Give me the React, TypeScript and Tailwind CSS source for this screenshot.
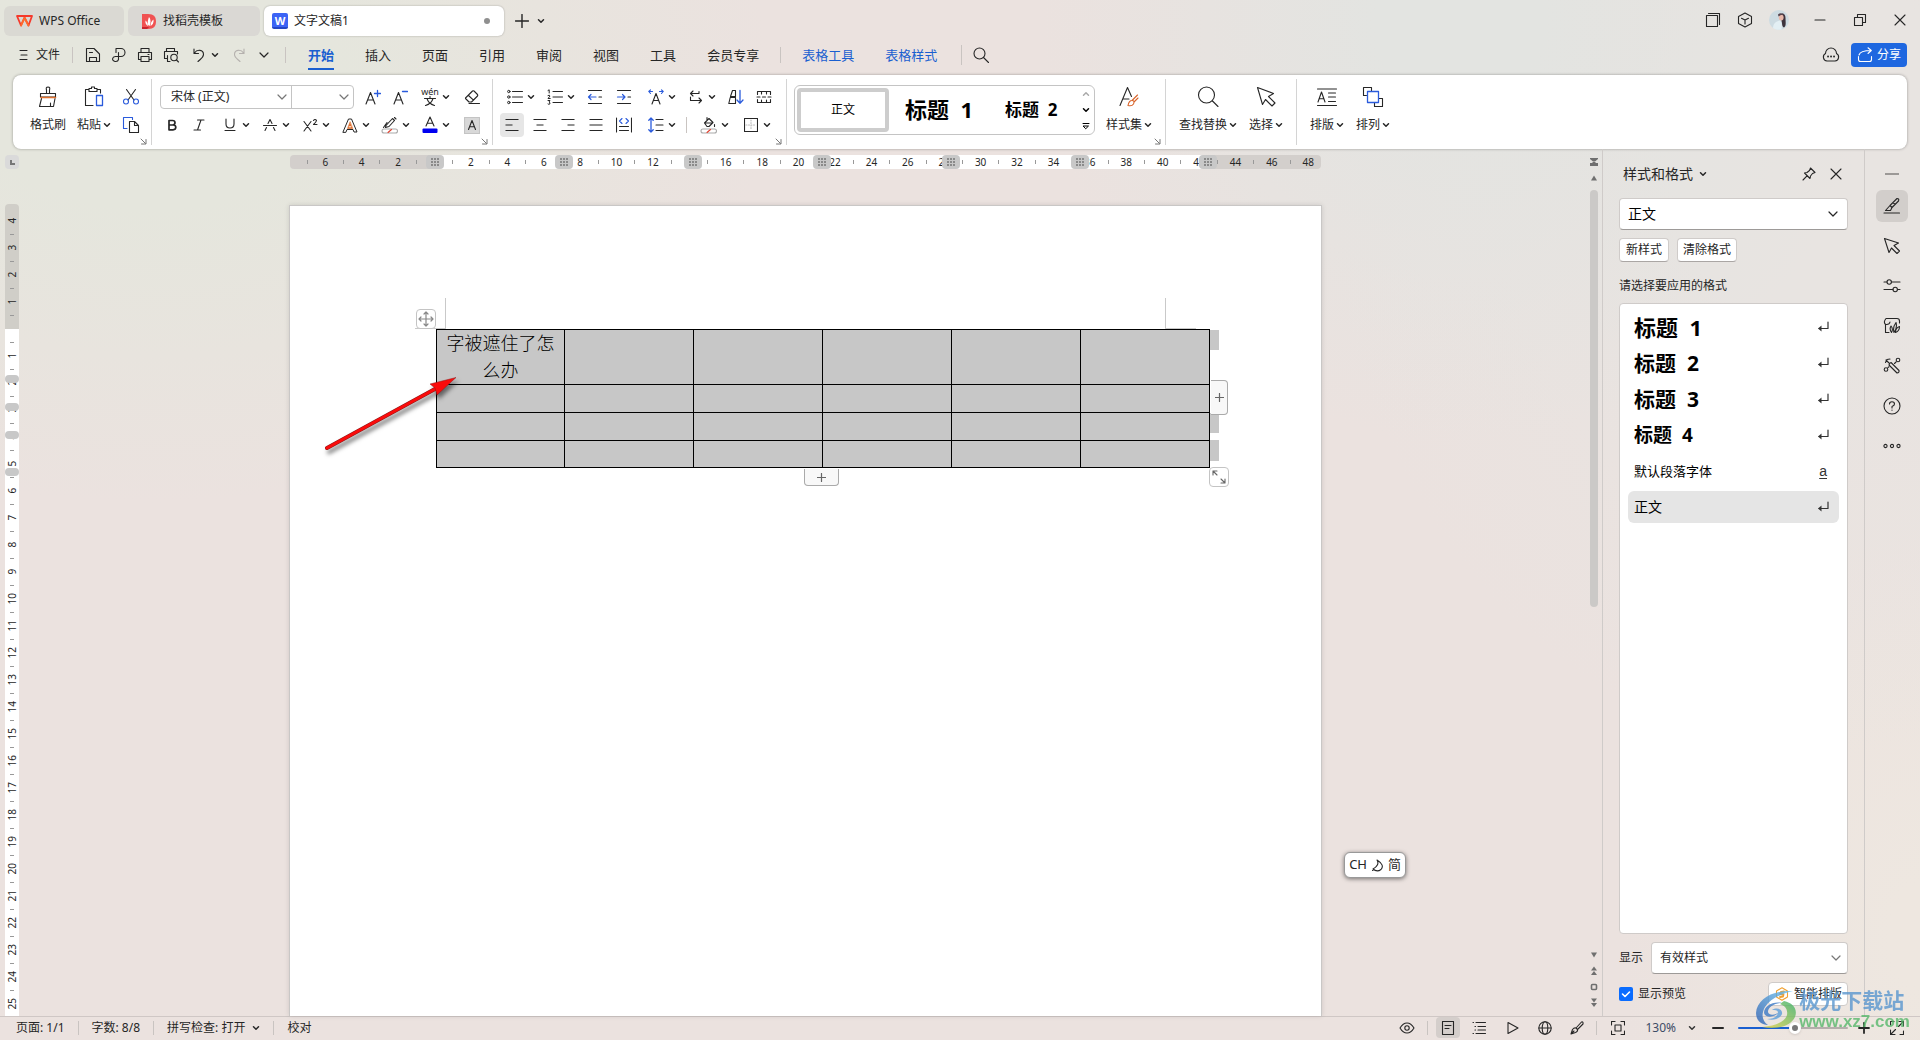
import type { ReactNode } from "react";
import { clsx } from "clsx";

type IconProps = { size?: number; w?: number; className?: string; sw?: number; children: ReactNode };

const Ico = ({ size = 18, w, className, sw = 1.1, children }: IconProps) => (
  <svg
    width={w ?? size}
    height={size}
    viewBox={`0 0 ${w ?? size} ${size}`}
    fill="none"
    stroke="currentColor"
    strokeWidth={sw}
    strokeLinejoin="round"
    strokeLinecap="round"
    className={clsx("shrink-0", className)}
    aria-hidden="true"
  >
    {children}
  </svg>
);

const Chevron = ({ className }: { className?: string }) => (
  <Ico size={8} sw={1.5} className={className}>
    <path d="M1.5 2.8 4 5.2 6.5 2.8" />
  </Ico>
);

const WideChevron = ({ className }: { className?: string }) => (
  <Ico size={10} sw={1.2} className={className}>
    <path d="M1 3 5 7 9 3" />
  </Ico>
);

const Tool = ({ label, active, drop, children }: { label: string; active?: boolean; drop?: boolean; children: ReactNode }) => (
  <button
    type="button"
    aria-label={label}
    className={clsx("flex h-6 shrink-0 items-center rounded", drop ? "w-8" : "w-6", active && "bg-[#e6e6e6]")}
  >
    <span className="flex w-6 shrink-0 justify-center">{children}</span>
    {drop && <Chevron />}
  </button>
);

const BigTool = ({ label, drop, icon }: { label: string; drop?: boolean; icon: ReactNode }) => (
  <button type="button" className="flex shrink-0 flex-col items-center gap-1">
    <span className="flex h-6 items-center">{icon}</span>
    <span className="flex h-6 items-center gap-0.5 whitespace-nowrap">
      {label}
      {drop && <Chevron />}
    </span>
  </button>
);

const Launcher = () => (
  <button type="button" aria-label="对话框" className="absolute right-1 bottom-0 text-[#777]">
    <Ico size={7} sw={1}>
      <path d="M1 1 5.5 5.5M6 1.5V6H1.5" />
    </Ico>
  </button>
);

const Group = ({ className, launcher, children }: { className?: string; launcher?: boolean; children: ReactNode }) => (
  <div className={clsx("relative flex h-[66px] shrink-0 border-r border-[#d4d4d4] pt-1.5", className)}>
    {children}
    {launcher && <Launcher />}
  </div>
);

const BLUE = "#2a5bdc";

/* ---------- title bar ---------- */

const TitleBar = () => (
  <header className="flex h-[38px] shrink-0 items-start pt-1.5 pl-1">
    <button type="button" className="flex h-[30px] w-30 items-center gap-1.5 rounded-md bg-[#dad9d3] pl-3">
      <Ico size={14} w={17} sw={1.8} className="text-[#f5392b]">
        <path d="M1 2H16L12.5 11.5 8.5 3.5 5 11.5Z" />
        <path d="M5 11.5 8.5 4 12.5 11.5" stroke="#ff6a2b" />
      </Ico>
      WPS Office
    </button>
    <button type="button" className="ml-1 flex h-[30px] w-33 items-center gap-1.5 rounded-md bg-[#dad8d4] pl-3.5">
      <Ico size={17} w={15} sw={0}>
        <path d="M0 1H6C12 1 14 4 14 8.500S12 16 6 16H0Z" fill="#f05252" />
        <path d="M0 14H7L5 16H0Z" fill="#c9242d" />
        <path d="M7 4C9 6 9 10 7.500 13 5 12 5.500 8 7 4ZM3.500 7.500C5 8.500 6 11 6 13 4 12 3 10 3.500 7.500ZM11.500 6.500C12 10 10.500 12 8.500 13 8.500 10 9.500 8 11.500 6.500Z" fill="#fff" />
      </Ico>
      找稻壳模板
    </button>
    <button type="button" className="ml-1 flex h-[30px] w-60 items-center gap-1.5 rounded-md bg-white pr-3.5 pl-2 shadow-[0_0_2px_rgba(0,0,0,0.3)]">
      <span className="flex size-4 items-center justify-center rounded-xs border-b-2 border-[#2446c4] bg-[#3c64f5] text-[11px] leading-none font-bold text-white">W</span>
      文字文稿1
      <i className="ml-auto size-1.5 rounded-full bg-[#8f8f8f]" />
    </button>
    <button type="button" aria-label="新建" className="ml-[11px] flex h-[30px] items-center">
      <Ico size={14} sw={1.4}><path d="M7 0.500V13.500M0.500 7H13.500" /></Ico>
    </button>
    <button type="button" aria-label="标签列表" className="ml-2 flex h-[30px] items-center">
      <Chevron />
    </button>
    <div className="ml-auto flex h-[28px] items-center">
      <button type="button" aria-label="窗口" className="mr-4">
        <Ico size={16}><path d="M1.500 3.500H12.500V14.500H1.500ZM3.500 1.500H14.500V12.500" /></Ico>
      </button>
      <button type="button" aria-label="应用" className="mr-4">
        <Ico size={16}><path d="M8 1 14.500 4.500V11.500L8 15 1.500 11.500V4.500ZM4.500 6.200 8 8 11.500 6.200M8 8V12" /></Ico>
      </button>
      <button type="button" aria-label="账户" className="mr-[25px]">
        <Ico size={20} sw={0}>
          <circle cx="10" cy="10" r="10" fill="#cddbe2" />
          <path d="M12 4C14 2.500 16.500 4 16.500 8 16.500 12 17.500 16 15 17.500 12.500 16.500 13.500 13 12.500 11Z" fill="#3d333c" />
          <ellipse cx="12.200" cy="7.500" rx="2.400" ry="3" fill="#e8b9ac" />
          <path d="M4 18C4 13 8 11 11 10.500 13 13 13 16 12.500 19.500 9 20.300 6 19.600 4 18Z" fill="#e3eff4" />
          <path d="M9 4.500C11 2.500 14 3 15.500 5.500 13 4.500 11 5 9.500 6.500Z" fill="#55444e" />
        </Ico>
      </button>
      <button type="button" aria-label="最小化" className="mr-[27px]">
        <Ico size={12}><path d="M1 6H11" /></Ico>
      </button>
      <button type="button" aria-label="还原" className="mr-[27px]">
        <Ico size={14}><path d="M1.500 4.500H9.500V12.500H1.500ZM4.500 4.500V1.500H12.500V9.500H9.500" /></Ico>
      </button>
      <button type="button" aria-label="关闭" className="mr-3.5">
        <Ico size={12}><path d="M1 1 11 11M11 1 1 11" /></Ico>
      </button>
    </div>
  </header>
);

/* ---------- menu bar ---------- */

const menuTabs = ["开始", "插入", "页面", "引用", "审阅", "视图", "工具", "会员专享"];

const Sep = ({ className }: { className?: string }) => <span className={clsx("w-px shrink-0 bg-[#c9c4c1]", className ?? "h-4")} />;

const MenuBar = () => (
  <nav className="flex h-[34px] shrink-0 items-center pr-[13px] pl-[19px]">
    <button type="button" className="flex items-center gap-2">
      <Ico size={12} w={9}><path d="M1 1.500H8M2 6H8M1 10.500H8" /></Ico>
      文件
    </button>
    <Sep className="ml-3 h-4" />
    <div className="ml-[11px] flex items-center gap-2">
      <button type="button" aria-label="保存">
        <Ico><path d="M2.500 2.500H10L15.500 8V15.500H2.500ZM5.500 15.500V11.500H12.500V15.500M5.500 6.500H8.500" /></Ico>
      </button>
      <button type="button" aria-label="输出为PDF">
        <Ico><path d="M6 6.500V2.500H11A4 4 0 0 1 11 10.500H6A3 2.500 0 1 0 8.500 13.500V6.500" /></Ico>
      </button>
      <button type="button" aria-label="打印">
        <Ico><path d="M5 6V2.500H13V6M4.500 13.500H2.500V6.500H15.500V13.500H13.500M5 10.500H13V15.500H5ZM12 8.500H13" /></Ico>
      </button>
      <button type="button" aria-label="打印预览">
        <Ico>
          <path d="M4.500 5V2.500H12.500V5M5 12.500H2.500V5.500H15.500V8M5.500 9.500V15.500H8" />
          <circle cx="12" cy="11.500" r="3.200" />
          <path d="M14.500 14 16.500 16" />
        </Ico>
      </button>
    </div>
    <button type="button" aria-label="撤销" className="ml-[11px] flex items-center gap-1">
      <Ico size={16}><path d="M3 2V6.500H7.500M3.500 6C6 2 12.500 2.500 12.500 7.500 12.500 10.500 9.500 12 7 14.500" /></Ico>
      <Chevron />
    </button>
    <button type="button" aria-label="恢复" className="ml-3 text-[#b5b1ae]">
      <Ico size={16}><path d="M13 2V6.500H8.500M12.500 6C10 2 3.500 2.500 3.500 7.500 3.500 10.500 6.500 12 9 14.500" /></Ico>
    </button>
    <button type="button" aria-label="更多" className="ml-3">
      <WideChevron />
    </button>
    <Sep className="ml-4 h-4" />
    <div className="ml-[22px] flex gap-[31px] text-[13px]">
      {menuTabs.map((t, i) => (
        <button
          type="button"
          key={t}
          className={clsx("h-[29px] border-b-2 pt-1 whitespace-nowrap", i === 0 ? "border-[#1a5fd0] font-bold text-[#1a5fd0]" : "border-transparent")}
        >
          {t}
        </button>
      ))}
    </div>
    <Sep className="ml-[21px] h-4" />
    <div className="ml-[21px] flex gap-[31px] text-[13px] text-[#1a5fd0]">
      <button type="button" className="h-[29px] border-b-2 border-transparent pt-1 whitespace-nowrap">表格工具</button>
      <button type="button" className="h-[29px] border-b-2 border-transparent pt-1 whitespace-nowrap">表格样式</button>
    </div>
    <Sep className="ml-6 h-5" />
    <button type="button" aria-label="搜索" className="ml-[11px]">
      <Ico size={16}><circle cx="6.500" cy="6.500" r="5.500" /><path d="M10.500 10.500 15.500 15.500" /></Ico>
    </button>
    <button type="button" aria-label="云同步" className="ml-auto">
      <Ico size={16} w={18}>
        <path d="M5 14A4 4 0 0 1 3.500 6.500 5.500 5.500 0 0 1 14.500 6.500 4 4 0 0 1 13 14Z" />
        <path d="M6 9.500H6.100M9 9.500H9.100M12 9.500H12.100" strokeWidth="1.800" />
      </Ico>
    </button>
    <button type="button" className="ml-[11px] flex h-6 w-14 items-center justify-center gap-1 rounded bg-[#1e67e0] text-white">
      <Ico size={16}><path d="M1.500 9.500V12.500Q1.500 14.500 3.500 14.500H12.500Q14.500 14.500 14.500 12.500V9.500M2 8C3 4.500 7 3.500 14 3.500M11 0.800 14.300 3.500 11 6.500" /></Ico>
      分享
    </button>
  </nav>
);

/* ---------- ribbon ---------- */

const Lines = ({ d }: { d: string }) => (
  <Ico size={16} sw={1.2}><path d={d} strokeLinecap="butt" /></Ico>
);

const Ribbon = () => (
  <section className="mx-[13px] mt-[3px] flex h-[74px] shrink-0 items-start rounded-lg bg-white pt-1 shadow-[0_0_3px_rgba(0,0,0,0.35)]">
    <Group className="w-[139px] pl-[17px]" launcher>
      <BigTool
        label="格式刷"
        icon={
          <Ico size={22} w={20}>
            <path d="M2.500 7.500H17.500V11H2.500ZM8.500 7.500V4Q7.500 1 10 1T11.500 4V7.500M3.500 12.500 1.500 20.500H15.500L17 12.500M12.500 17V20" />
            <path d="M3 11.500H17.500" stroke="#e0712f" strokeWidth="1.600" />
          </Ico>
        }
      />
      <div className="ml-[11px]">
        <BigTool
          label="粘贴"
          drop
          icon={
            <Ico size={22}>
              <path d="M6 3.500H2.500V19.500H10M14 3.500H17.500V7M6 2.500H8.500V1H11.500V2.500H14V5.500H6Z" />
              <path d="M13.500 9.500H19.500V19.500H13.500Z" stroke={BLUE} strokeWidth="1.300" />
            </Ico>
          }
        />
      </div>
      <div className="ml-2 flex flex-col gap-1">
        <Tool label="剪切">
          <Ico>
            <path d="M4.500 1.500 12 12M13.500 1.500 6 12" />
            <g stroke={BLUE}><circle cx="4" cy="13.500" r="2.500" /><circle cx="14" cy="13.500" r="2.500" /></g>
          </Ico>
        </Tool>
        <Tool label="复制">
          <Ico>
            <path d="M5 12.500H1.500V1.500H10.500V3.500" stroke={BLUE} />
            <path d="M7.500 5.500H12.500L16.500 9.500V16.500H7.500ZM12.500 5.500V9.500H16.500" />
          </Ico>
        </Tool>
      </div>
    </Group>

    <Group className="w-[341px] flex-col gap-1 pl-2" launcher>
      <div className="flex">
        <div className="flex h-6 w-[194px] rounded border border-[#c4c4c4]">
          <div className="relative w-[131px] border-r border-[#c4c4c4]">
            <select aria-label="字体" className="h-full w-full appearance-none bg-transparent pl-2.5 outline-none" defaultValue="a">
              <option value="a">宋体 (正文)</option>
            </select>
            <WideChevron className="pointer-events-none absolute top-1.5 right-1 text-[#777]" />
          </div>
          <div className="relative flex-1">
            <select aria-label="字号" className="h-full w-full appearance-none bg-transparent outline-none" defaultValue="">
              <option value="" />
              <option value="14">14</option>
            </select>
            <WideChevron className="pointer-events-none absolute top-1.5 right-1 text-[#777]" />
          </div>
        </div>
        <div className="ml-[7px] flex gap-[3px]">
          <Tool label="增大字号">
            <Ico size={16}><path d="M1 15 5.500 3.500 10 15M2.700 11H8.300" /><path d="M12.500 1.500V7.500M9.500 4.500H15.500" stroke={BLUE} strokeWidth="1.300" /></Ico>
          </Tool>
          <Tool label="减小字号">
            <Ico size={16}><path d="M2 15 6.500 3.500 11 15M3.700 11H9.300" /><path d="M10.500 2.500H15.500" stroke={BLUE} strokeWidth="1.300" /></Ico>
          </Tool>
        </div>
        <div className="ml-1.5 flex gap-2.5">
          <Tool label="拼音指南" drop>
            <span className="flex flex-col items-center">
              <span className="h-2 text-[9px] leading-[8px]">wén</span>
              <Ico size={10} w={12}><path d="M6 0.500V2M0.500 2.500H11.500M3 2.500C4 6 7 8.500 10.500 9.500M9 2.500C8 6 5 8.500 1.500 9.500" /></Ico>
            </span>
          </Tool>
          <Tool label="清除格式">
            <Ico size={16}><path d="M1.500 9 8.500 2Q9.200 1.500 10 2L13.500 5.500Q14 6.200 13.500 7L7.500 13H5L1.500 9.500ZM4.500 6.500 9.500 11.200M5 14.500H15.500" /></Ico>
          </Tool>
        </div>
      </div>
      <div className="flex">
        <div className="flex gap-[3px]">
          <Tool label="加粗"><Ico size={12} w={10} sw={1.7}><path d="M2 1.500H5.500Q8 1.500 8 3.700T5.500 6H2ZM2 6H6Q8.800 6 8.800 8.300T6 10.800H2Z" /></Ico></Tool>
          <Tool label="倾斜"><Ico size={12}><path d="M4.500 1H11M1 11H7.500M8 1 4.500 11" /></Ico></Tool>
        </div>
        <div className="ml-[7px] flex gap-2">
          <Tool label="下划线" drop><Ico size={14} w={12}><path d="M2 1V6Q2 10 6 10T10 6V1M1 12.500H11" /></Ico></Tool>
          <Tool label="删除线" drop><Ico size={14}><path d="M0.500 7.500H13.500M5 5.500 7 1.500 9 5.500M3.500 9.500 2 12.500M10.500 9.500 12 12.500" /></Ico></Tool>
          <Tool label="上标" drop><Ico size={14} w={15}><path d="M1 3.500 8 13M8 3.500 1 13M10.500 2.500Q12 0.500 13.500 2.300 13.500 4 10.500 6.500H14" /></Ico></Tool>
          <Tool label="文字效果" drop>
            <Ico size={15} w={16} sw={1}>
              <path d="M1 14 6.500 1H9.500L15 14H12L11 11.500H5L4 14Z" />
              <path d="M8 4 5.500 10.500H10.500Z" stroke="#e0712f" fill="#e0712f" strokeWidth="0.600" />
              <path d="M7.200 8.800H8.800" stroke="#fff" />
            </Ico>
          </Tool>
          <Tool label="突出显示" drop>
            <Ico size={18}>
              <path d="M5 9.500 11.500 2.500 13.500 4.500 8 10.500 4.500 11.500ZM2.500 11.500 6 6.500M13.500 1.500 15 3" />
              <rect x="1" y="13" width="15.500" height="4" rx="2" stroke="#aaa" />
              <path d="M7 16.500 10.500 13.500" stroke="#e0402f" />
            </Ico>
          </Tool>
          <Tool label="字体颜色" drop>
            <Ico size={18} w={16}>
              <path d="M4 10 8 1 12 10M5.300 7.200H10.700" />
              <rect x="0.500" y="12.500" width="15" height="4.500" rx="1" fill="#0000f0" stroke="none" />
            </Ico>
          </Tool>
        </div>
        <div className="ml-2.5">
          <Tool label="字符底纹">
            <Ico size={17} w={16}>
              <rect x="0.500" y="0.500" width="15" height="16" fill="#d8d8d8" stroke="#c4c4c4" />
              <path d="M4.500 12.500 8 3.500 11.500 12.500M5.500 9.700H10.500" />
            </Ico>
          </Tool>
        </div>
      </div>
    </Group>

    <Group className="w-[294px] flex-col gap-1 pl-[7px]" launcher>
      <div className="flex gap-2 pl-[3px]">
        <Tool label="项目符号" drop>
          <Ico size={16} sw={1}><path d="M5.500 2.500H15.500M5.500 8H15.500M5.500 13.500H15.500" /><circle cx="1.800" cy="2.500" r="1.200" /><circle cx="1.800" cy="8" r="1.200" /><circle cx="1.800" cy="13.500" r="1.200" /></Ico>
        </Tool>
        <Tool label="编号" drop>
          <Ico size={16} sw={1}><path d="M6 2.500H15.500M6 8H15.500M6 13.500H15.500M1 1.500 2.200 0.800V4M1 6.500Q2.800 5.600 3 7L1 9.500H3.200M1 11.500H3L2 13Q3.500 13.500 2.800 15 2 15.800 1 15" /></Ico>
        </Tool>
        <div className="flex gap-[5px]">
          <Tool label="减少缩进"><Ico size={16} sw={1.2}><path d="M1.500 1.500H14.500M1.500 14.500H14.500M12 8H14.500" /><path d="M1.500 8H9M4 5.500 1.500 8 4 10.500" stroke={BLUE} /></Ico></Tool>
          <Tool label="增加缩进"><Ico size={16} sw={1.2}><path d="M1.500 1.500H14.500M1.500 14.500H14.500M12 8H14.500" /><path d="M1.500 8H9M6.500 5.500 9 8 6.500 10.500" stroke={BLUE} /></Ico></Tool>
        </div>
        <Tool label="中文版式" drop>
          <Ico size={16}><path d="M4 15 8 4.500 12 15M5.500 11.500H10.500" /><path d="M0.800 2.500H4.500M2.500 0.800 0.800 2.500 2.500 4.500M11.500 2.500H15.200M13.500 0.800 15.200 2.500 13.500 4.500" stroke={BLUE} /></Ico>
        </Tool>
        <Tool label="文字方向" drop>
          <Ico size={16} w={14}><path d="M10 2.500V4.500H1.500M4 2 1.500 4.500 4 7M1.500 8V11.500H12.500M10 9 12.500 11.500 10 14" /></Ico>
        </Tool>
        <div className="flex gap-1">
          <Tool label="排序"><Ico size={16}><path d="M2.500 7.500 4.500 1.500H7.500V7.500ZM0.800 14.500 2.200 8.500H7.500V14.500Z" /><path d="M12 1.500V14M9 11 12 14.200 15 11" stroke={BLUE} strokeWidth="1.300" /></Ico></Tool>
          <Tool label="表格"><Ico size={16}><path d="M1.500 5.500V2.500H14.500V5.500M1.500 10.500V13.500H14.500V10.500M1 8H4M6.500 8H9.500M12 8H15M5.500 2.500V5M10.500 2.500V5M5.500 11V13.500M10.500 11V13.500" /></Ico></Tool>
        </div>
      </div>
      <div className="flex items-center gap-1">
        <Tool label="左对齐" active><Lines d="M1.500 2.500H14.500M1.500 8H8.500M1.500 13.500H14.500" /></Tool>
        <Tool label="居中"><Lines d="M1.500 2.500H14.500M4.500 8H11.500M1.500 13.500H14.500" /></Tool>
        <Tool label="右对齐"><Lines d="M1.500 2.500H14.500M7.500 8H14.500M1.500 13.500H14.500" /></Tool>
        <Tool label="两端对齐"><Lines d="M1.500 2.500H14.500M1.500 8H14.500M1.500 13.500H14.500" /></Tool>
        <Tool label="分散对齐">
          <Ico size={16}><path d="M0.500 1V15M15.500 1V15M3.500 9.500H12.500M3.500 13.500H12.500" /><path d="M6 1.500 3.500 4 6 6.500M10 1.500 12.500 4 10 6.500" stroke={BLUE} /></Ico>
        </Tool>
        <div className="ml-1 flex items-center gap-2.5">
          <Tool label="行距" drop>
            <Ico size={16}><path d="M8 2.500H15M8 8H15M8 13.500H15" /><path d="M3 1V15M0.800 3.200 3 1 5.200 3.200M0.800 12.800 3 15 5.200 12.800" stroke={BLUE} strokeWidth="1.300" /></Ico>
          </Tool>
          <Sep />
          <Tool label="底纹" drop>
            <Ico size={18}>
              <path d="M4.500 7 9 2.500 13 6.500 9 10.500H7ZM7 4.500V1.500M5 7H12.500M14.500 8.500V10.500" />
              <rect x="1" y="13" width="15.500" height="4" rx="2" stroke="#aaa" />
              <path d="M7 16.500 10.500 13.500" stroke="#e0402f" />
            </Ico>
          </Tool>
          <Tool label="边框" drop>
            <Ico size={14}><path d="M7 2V12M2 7H12" stroke="#bbb" strokeDasharray="1 1.500" /><rect x="0.500" y="0.500" width="13" height="13" /></Ico>
          </Tool>
        </div>
      </div>
    </Group>

    <Group className="w-[379px] pl-[7px]" launcher>
      <div className="flex h-[50px] w-[301px] items-center rounded-md border border-[#c4c4c4] text-black">
        <button type="button" className="ml-0.5 flex h-[44px] w-[92px] items-center justify-center rounded border-4 border-[#cdcdcd]">正文</button>
        <button type="button" className="ml-4 text-[22px] font-bold whitespace-pre">标题  1</button>
        <button type="button" className="ml-8 text-[17px] font-bold whitespace-pre">标题  2</button>
        <div className="mr-1 ml-auto flex flex-col gap-2">
          <button type="button" aria-label="上一行"><Chevron className="rotate-180 text-[#aaa]" /></button>
          <button type="button" aria-label="下一行"><Chevron /></button>
          <button type="button" aria-label="展开样式">
            <Ico size={8} sw={1}><path d="M1 1.500H7M1.500 4H6.500L4 6.500Z" /></Ico>
          </button>
        </div>
      </div>
      <div className="ml-[11px]">
        <BigTool
          label="样式集"
          drop
          icon={
            <Ico size={22} w={20}>
              <path d="M1 19.500 8.500 1.500 12.500 10.500M4 13H10" />
              <path d="M18.500 9 13 14.500M19 12 15 16M9 19.500Q10 14.500 13 14.500T14.500 18Q13 20.500 9 19.500Z" stroke="#d9642a" />
            </Ico>
          }
        />
      </div>
    </Group>

    <Group className="w-[131px] gap-3 pl-[13px]">
      <BigTool label="查找替换" drop icon={<Ico size={22}><circle cx="9.500" cy="9" r="8" /><path d="M15.500 15 21 20.500" /></Ico>} />
      <BigTool label="选择" drop icon={<Ico size={22} w={20}><path d="M1.500 1.500 17.500 7.500 12.500 10.500 19 17 16 20 9.500 13.500 6.500 18.500Z" /></Ico>} />
    </Group>

    <div className="flex gap-3 pt-1.5 pl-[13px]">
      <BigTool label="排版" drop icon={<Ico size={20}><path d="M0.500 2H19.500M0.500 18.500H19.500M11.500 6H18.500M11.500 10H18.500M11.500 14.500H18.500M1 15 4.500 5 8 15M2 11.800H7" /></Ico>} />
      <BigTool
        label="排列"
        drop
        icon={
          <Ico size={22}>
            <path d="M4.500 9.500H1.500V1.500H9.500V4.500M17 12.500H20.500V20.500H12.500V17" />
            <rect x="5.500" y="5.500" width="11" height="11" stroke={BLUE} strokeWidth="1.300" />
          </Ico>
        }
      />
    </div>
  </section>
);

/* ---------- rulers ---------- */

const hTicks = Array.from({ length: 56 }, (_, i) => i - 7);
const vTicks = Array.from({ length: 30 }, (_, i) => i - 4);
const colHandles = [145, 274, 403, 532, 661, 790, 918];
const rowHandles = [175, 203, 231, 268];

const HRuler = () => (
  <div className="relative flex h-3.5 w-[1031px] items-center rounded bg-[linear-gradient(to_right,#d3cfcc_145px,#fff_145px,#fff_919px,#d3cfcc_919px)] pr-1 pl-2 text-[10px] leading-none">
    {hTicks.map((n) => (
      <span key={n} className="flex min-w-0 flex-1 justify-center">
        {n % 2 === 0 ? n !== 0 && Math.abs(n) : <i className="h-1 w-px bg-[#999]" />}
      </span>
    ))}
    {colHandles.map((x) => (
      <span key={x} className="absolute flex h-3.5 w-[18px] -translate-x-1/2 items-center justify-center rounded bg-[#c8c8c8]" style={{ left: x }}>
        <i className="grid grid-cols-3 gap-px">
          {Array.from({ length: 9 }, (_, i) => <b key={i} className="size-0.5 bg-[#8a8a8a]" />)}
        </i>
      </span>
    ))}
  </div>
);

const VRuler = () => (
  <div className="relative mt-[35px] ml-[5px] w-3.5 shrink-0 overflow-hidden rounded-t bg-[linear-gradient(to_bottom,#d0cec8_125px,#fff_125px)] pt-2.5 text-[10px] leading-none">
    {vTicks.map((n) => (
      <div key={n} className="flex h-[27px] flex-col items-center">
        <span className="flex flex-1 -rotate-90 items-center">{n !== 0 && Math.abs(n)}</span>
        <span className="flex flex-1 items-center"><i className="h-px w-1 bg-[#999]" /></span>
      </div>
    ))}
    {rowHandles.map((y) => (
      <span key={y} className="absolute left-0 h-2 w-3.5 -translate-y-1/2 rounded-full bg-[#c8c8c8]" style={{ top: y }} />
    ))}
  </div>
);

/* ---------- document ---------- */

const rows = [
  { h: "h-[55px]", text: "字被遮住了怎么办" },
  { h: "h-7", text: "" },
  { h: "h-7", text: "" },
  { h: "h-[27px]", text: "" },
];

const DocTable = () => (
  <div className="relative w-[774px]">
    <table className="w-full table-fixed border-collapse bg-[#c7c7c7] text-[18px] leading-[27px] font-light text-black">
      <colgroup>
        <col className="w-[128px]" />
        <col span={5} />
      </colgroup>
      <tbody>
        {rows.map((r, i) => (
          <tr key={i} className={r.h}>
            {Array.from({ length: 6 }, (_, c) => (
              <td key={c} className="border border-black p-0 px-2 text-center align-top">{c === 0 ? r.text : ""}</td>
            ))}
          </tr>
        ))}
      </tbody>
    </table>
    {/* page margin corners */}
    <span className="absolute -top-[31px] -left-[21px] h-[31px] w-[31px] border-r border-b border-[#c9c9c9]" />
    <span className="absolute -top-[31px] left-[729px] h-[31px] w-[31px] border-b border-l border-[#c9c9c9]" />
    {/* end-of-row marks */}
    <span className="absolute top-px -right-[9px] h-5 w-[9px] bg-[#c7c7c7]" />
    <span className="absolute top-[84px] -right-[9px] h-5 w-[9px] bg-[#c7c7c7]" />
    <span className="absolute top-[111px] -right-[9px] h-[21px] w-[9px] bg-[#c7c7c7]" />
    <button type="button" aria-label="移动表格" className="absolute -top-5 -left-5 flex size-5 items-center justify-center rounded-sm border border-[#c4c4c4] bg-white text-[#888]">
      <Ico size={16} sw={1.2}><path d="M8 1V15M1 8H15M6 3 8 1 10 3M6 13 8 15 10 13M3 6 1 8 3 10M13 6 15 8 13 10" /></Ico>
    </button>
    <button type="button" aria-label="添加列" className="absolute top-[51px] -right-[18px] flex h-[35px] w-[17px] items-center justify-center rounded-r border border-l-0 border-[#aaa] bg-[#f8f8f8] text-[#666]">
      <Ico size={9} sw={1.2}><path d="M4.500 0.500V8.500M0.500 4.500H8.500" /></Ico>
    </button>
    <button type="button" aria-label="添加行" className="absolute top-[140px] left-[368px] flex h-[17px] w-[35px] items-center justify-center rounded-b border border-t-0 border-[#aaa] bg-[#f8f8f8] text-[#666]">
      <Ico size={9} sw={1.2}><path d="M4.500 0.500V8.500M0.500 4.500H8.500" /></Ico>
    </button>
    <button type="button" aria-label="调整大小" className="absolute top-[138px] -right-[19px] flex size-5 items-center justify-center rounded-sm border border-[#c4c4c4] bg-white text-[#666]">
      <Ico size={14} sw={1.1}><path d="M1 5V1H5M1 1 5 5M13 9V13H9M13 13 9 9" /></Ico>
    </button>
    {/* red pointer */}
    <svg className="absolute top-[39px] -left-[116px] drop-shadow-[2px_4px_2px_rgba(0,0,0,0.5)]" width="144" height="92" viewBox="0 0 144 92" aria-hidden="true">
      <path d="M7 80 115 21" stroke="#8b1a1a" strokeWidth="4" strokeLinecap="round" />
      <path d="M7 80 115 21" stroke="#fb0b0b" strokeWidth="3" strokeLinecap="round" />
      <path d="M136 9.500 110 16 115 20 117 27Z" fill="#fb0b0b" stroke="#8b1a1a" strokeWidth="0.500" />
    </svg>
  </div>
);

const ScrollBar = () => (
  <div className="flex w-[13px] shrink-0 flex-col items-start pt-2 text-[#6f6f6f]">
    <Ico size={10} sw={0}><path d="M1 1H9V2L6 4.500H4L1 2ZM1 6H3.500V5H6.500V6H9V9H1Z" fill="currentColor" /></Ico>
    <Ico size={10} sw={0} className="mt-1.5"><path d="M5 2.500 8 7.500H2Z" fill="currentColor" /></Ico>
    <div className="mt-[7px] ml-px h-[417px] w-2 rounded bg-[#cbc9c7]" />
    <div className="mt-auto mb-2 flex flex-col gap-1.5">
      <Ico size={10} sw={0}><path d="M5 7.500 8 2.500H2Z" fill="currentColor" /></Ico>
      <Ico size={10} sw={0}><path d="M5 0.500 8 4.500H2ZM5 5 8 9H2Z" fill="currentColor" /></Ico>
      <Ico size={10} sw={1.6}><rect x="2.500" y="2.500" width="5" height="5" rx="1" /></Ico>
      <Ico size={10} sw={0}><path d="M5 4.500 8 0.500H2ZM5 9 8 5H2Z" fill="currentColor" /></Ico>
    </div>
  </div>
);

/* ---------- style panel ---------- */

const styleList = [
  { name: "标题  1", cls: "text-[22px] font-bold" },
  { name: "标题  2", cls: "text-[21px] font-bold" },
  { name: "标题  3", cls: "text-[21px] font-bold" },
  { name: "标题  4", cls: "text-[19px] font-bold" },
  { name: "默认段落字体", cls: "text-[13px]", char: true },
  { name: "正文", cls: "text-sm", active: true },
];

const StylePanel = () => (
  <aside className="flex w-[262px] shrink-0 flex-col border-l border-[#cfcbc9] pr-4 pl-4">
    <div className="mt-3 flex h-[26px] items-center pr-1.5 pl-1">
      <h2 className="text-sm">样式和格式</h2>
      <button type="button" aria-label="面板菜单" className="ml-1.5"><Chevron /></button>
      <button type="button" aria-label="固定" className="ml-auto">
        <Ico size={14}><path d="M8.500 1 13 5.500 10.500 6.500 8.500 9 8 11.500 2.500 6 5 5.500 7.500 3.500ZM5 8.800 1 13" /></Ico>
      </button>
      <button type="button" aria-label="关闭面板" className="ml-3.5">
        <Ico size={12}><path d="M1 1 11 11M11 1 1 11" /></Ico>
      </button>
    </div>
    <div className="relative mt-[11px]">
      <select aria-label="当前样式" className="h-8 w-full appearance-none rounded border border-[#cfcbc9] border-b-[#9d9a98] bg-white pl-2 text-sm text-black outline-none">
        <option>正文</option>
      </select>
      <WideChevron className="pointer-events-none absolute top-[11px] right-2.5" />
    </div>
    <div className="mt-2 flex gap-2">
      <button type="button" className="h-6 rounded border border-[#cfcbc9] border-b-[#aaa6a4] bg-white px-1.5">新样式</button>
      <button type="button" className="h-6 rounded border border-[#cfcbc9] border-b-[#aaa6a4] bg-white px-[5px]">清除格式</button>
    </div>
    <p className="mt-4 leading-4">请选择要应用的格式</p>
    <ul className="mt-[9px] flex min-h-0 flex-1 flex-col gap-1 rounded border border-[#cfcbc9] bg-white px-2 pt-[7px] text-black">
      {styleList.map((s) => (
        <li key={s.name}>
          <button type="button" className={clsx("flex h-8 w-full items-center justify-between rounded-md pr-2.5 pl-1.5", s.active && "bg-[#e5e5e5]")}>
            <span className={clsx("leading-none whitespace-pre", s.cls)}>{s.name}</span>
            {s.char ? (
              <span className="pr-0.5 font-['Liberation_Sans'] text-sm leading-none text-[#333] underline underline-offset-2">a</span>
            ) : (
              <Ico size={12} sw={1.2} className="text-[#333]"><path d="M11 1V7.500H2" /><path d="M1 7.500 4.500 4.500V10.500Z" fill="currentColor" stroke="none" /></Ico>
            )}
          </button>
        </li>
      ))}
    </ul>
    <div className="mt-2 flex items-center gap-2">
      <label htmlFor="show">显示</label>
      <div className="relative flex-1">
        <select id="show" className="h-8 w-full appearance-none rounded border border-[#cfcbc9] border-b-[#9d9a98] bg-white pl-2 outline-none">
          <option>有效样式</option>
        </select>
        <WideChevron className="pointer-events-none absolute top-[11px] right-[7px] text-[#777]" />
      </div>
    </div>
    <div className="mt-2 mb-2.5 flex items-center">
      <span className="relative flex">
        <input id="preview" type="checkbox" defaultChecked className="size-3.5 appearance-none rounded-xs bg-[#0a6cff]" />
        <Ico size={14} sw={1.6} className="pointer-events-none absolute inset-0 text-white"><path d="M3.500 7 6 9.500 10.500 5" /></Ico>
      </span>
      <label htmlFor="preview" className="ml-[5px]">显示预览</label>
      <button type="button" className="ml-auto flex h-6 items-center gap-[5px] rounded border border-[#cfcbc9] bg-white pr-[5px] pl-1.5">
        <Ico size={14} className="text-[#f0a030]"><path d="M7 0.800 12.500 4V10L7 13.200 1.500 10V4Z" /><path d="M9 4.500 6 5 5 7 8.500 7.500 8 9.500 5 10" strokeWidth="1.800" /></Ico>
        智能排版
      </button>
    </div>
  </aside>
);

const railItems: { label: string; icon: ReactNode }[] = [
  { label: "样式", icon: <path d="M1 16H16.500M2.500 13.500H7.500L9 10.500 15.500 4Q16.500 1.500 14 1.500L7 8.500ZM2.500 13.500 7 8.500 9 10.500M10 5.500 12 7.500" /> },
  { label: "选择", icon: <path d="M1.500 1.500 15.500 6 11 8.500 16.500 14 14 16.500 8.500 11 6 15.500Z" /> },
  { label: "属性", icon: <><path d="M1 5H4M8.500 5H17M1 12.500H10M14.500 12.500H17" /><circle cx="6.200" cy="5" r="2.200" /><circle cx="12.200" cy="12.500" r="2.200" /></> },
  { label: "素材", icon: <path d="M3 1.500H14Q16.500 1.500 16.500 4V6M2.500 7.500V15.500H6M2.500 7.500Q0 5 3 1.500M2.500 7.500Q6.500 8 7 5M8.500 15.500Q6 12 8 9 10.500 12 8.500 15.500ZM11 15.500Q9.500 10 13 5.500 14.500 11 11 15.500ZM12.500 15.500Q12.500 11 16.500 9.500 16.500 14 12.500 15.500Z" /> },
  { label: "工具", icon: <><path d="M3 3 6 6M2.500 5.500 4 2.500 7 2M8 5.500 16 13.500Q16.500 15.500 14 16L6 8Q6.500 6 8 5.500Z" /><circle cx="15" cy="3" r="1.800" /><circle cx="3" cy="12.500" r="1.800" /><path d="M11.500 6.500 13 5M5 10.500 6 9.800" /></> },
  { label: "帮助", icon: <><circle cx="9" cy="9" r="8" /><path d="M6.500 7Q6.500 4.800 9 4.800T11.500 7Q11.500 8.500 9 9.500V11M9 13V13.200" /></> },
  { label: "更多", icon: <><circle cx="2.500" cy="9" r="1.600" /><circle cx="9" cy="9" r="1.600" /><circle cx="15.500" cy="9" r="1.600" /></> },
];

const Rail = () => (
  <aside className="flex w-14 shrink-0 flex-col items-center border-l border-[#cfcbc9] pt-6 pr-px">
    <span className="h-0.5 w-3.5 bg-[#9c9997]" />
    <div className="mt-[15px] flex flex-col gap-2">
      {railItems.map((r, i) => (
        <button type="button" key={r.label} aria-label={r.label} className={clsx("flex size-8 items-center justify-center rounded-md", i === 0 && "bg-[#d2cecb]")}>
          <Ico size={18}>{r.icon}</Ico>
        </button>
      ))}
    </div>
  </aside>
);

/* ---------- status bar ---------- */

const StatusBar = () => (
  <footer className="flex h-6 shrink-0 items-center border-t border-[#cfc7c5] pr-4 pb-0.5 pl-4">
    <span>页面: 1/1</span>
    <Sep className="mx-[13px] h-3.5" />
    <span>字数: 8/8</span>
    <Sep className="mx-[13px] h-3.5" />
    <button type="button" className="flex items-center gap-[7px]">拼写检查: 打开 <Chevron /></button>
    <Sep className="mx-[13px] h-3.5" />
    <span>校对</span>
    <div className="ml-auto flex h-full items-center">
      <button type="button" aria-label="护眼模式">
        <Ico size={14} w={16}><path d="M1 7Q4 2 8 2T15 7Q12 12 8 12T1 7Z" /><circle cx="8" cy="7" r="2.200" /></Ico>
      </button>
      <Sep className="mr-2 ml-3 h-3.5" />
      <button type="button" aria-label="页面视图" className="flex h-full w-6 items-center justify-center rounded bg-[#d4cecb]">
        <Ico size={14}><path d="M1.500 0.500H12.500V13.500H1.500ZM4 4.500H10M4 7.500H8" /></Ico>
      </button>
      <button type="button" aria-label="大纲" className="ml-3">
        <Ico size={14}><path d="M1 1.500H1.500M4 1.500H13.500M3 5.500H3.500M6 5.500H13.500M3 9H3.500M6 9H13.500M1 12.500H1.500M4 12.500H13.500" /></Ico>
      </button>
      <button type="button" aria-label="阅读" className="ml-5">
        <Ico size={14}><path d="M2 1.500 12 7 2 12.500Z" /></Ico>
      </button>
      <button type="button" aria-label="Web版式" className="ml-[18px]">
        <Ico size={14}><circle cx="7" cy="7" r="6.200" /><ellipse cx="7" cy="7" rx="2.800" ry="6.200" /><path d="M1 7H13" /></Ico>
      </button>
      <button type="button" aria-label="写作" className="ml-[18px]">
        <Ico size={14}><path d="M6 7 11.500 1Q13.500 0.500 13 3L7.500 8.500ZM6 7Q4 6.500 2.500 8.500L1 13 5.500 11.500Q8 10.500 7.500 8.500ZM1 13 4 10" /></Ico>
      </button>
      <Sep className="ml-3 h-3.5" />
      <button type="button" aria-label="最佳显示比例" className="ml-3.5">
        <Ico size={14}><path d="M0.500 4V0.500H4M10 0.500H13.500V4M13.500 10V13.500H10M4 13.500H0.500V10M4 4H10V10H4Z" /></Ico>
      </button>
      <button type="button" className="ml-5 flex items-center gap-3 text-[#3d4c66]">130% <Chevron className="text-[#333]" /></button>
      <button type="button" aria-label="缩小" className="ml-4">
        <Ico size={12} sw={2}><path d="M1 6H11" /></Ico>
      </button>
      <input
        type="range"
        aria-label="显示比例"
        defaultValue={52}
        className="mx-3.5 h-0.5 w-[110px] appearance-none rounded bg-[linear-gradient(to_right,#1a5fd0_52%,#b5aeac_52%)] [&::-webkit-slider-thumb]:size-3 [&::-webkit-slider-thumb]:appearance-none [&::-webkit-slider-thumb]:rounded-full [&::-webkit-slider-thumb]:border-[3px] [&::-webkit-slider-thumb]:border-white [&::-webkit-slider-thumb]:bg-[#777] [&::-webkit-slider-thumb]:shadow"
      />
      <button type="button" aria-label="放大" className="-ml-1">
        <Ico size={12} sw={1.8}><path d="M6 1V11M1 6H11" /></Ico>
      </button>
      <button type="button" aria-label="全屏" className="ml-5">
        <Ico size={14}><path d="M9 0.500H13.500V5M13 1 8.500 5.500M5 13.500H0.500V9M1 13 5.500 8.500M0.500 4V0.500H4M13.500 10V13.500H10" /></Ico>
      </button>
    </div>
  </footer>
);

const Watermark = () => (
  <div className="pointer-events-none absolute right-2.5 bottom-2 flex items-center gap-0.5 opacity-80">
    <svg width="42" height="42" viewBox="0 0 42 42" aria-hidden="true">
      <defs>
        <linearGradient id="swirlBlue" x1="0" y1="1" x2="1" y2="0">
          <stop offset="0" stopColor="#2b5fb4" />
          <stop offset="1" stopColor="#6fc4ee" />
        </linearGradient>
        <linearGradient id="swirlGreen" x1="0" y1="1" x2="1" y2="0">
          <stop offset="0" stopColor="#e8d44a" />
          <stop offset="1" stopColor="#35b06a" />
        </linearGradient>
      </defs>
      <path d="M38 2C18 1 2 10 1 24 1 31 6 36 13 36 7 32 6 25 10 18 15 10 26 5 38 2Z" fill="url(#swirlBlue)" />
      <path d="M29 12C38 14 43 20 40 28 36 37 22 41 7 38 20 37 30 33 32 26 33 20 30 17 25 15Z" fill="url(#swirlGreen)" />
      <path d="M27 14C18 12 9 17 9 24 10 29 20 29 24 23 21 26 14 27 13 23 13 18 20 14 27 14Z" fill="#3b79c6" />
      <path d="M17 21C22 18 28 20 27 25 25 30 18 32 12 30 19 30 23 27 23 23 22 21 20 21 17 21Z" fill="#5d9edb" />
    </svg>
    <div className="leading-none font-bold">
      <div className="text-[21px] leading-6 text-[#5a97cf]">极光下载站</div>
      <div className="font-['Liberation_Sans'] text-[17px] leading-5 text-[#58b86c]">www.xz7.com</div>
    </div>
  </div>
);

export default function App() {
  return (
    <div className="relative flex h-screen flex-col overflow-hidden bg-[#ebe2df] bg-[radial-gradient(ellipse_620px_420px_at_8%_8%,#e5e6dd_30%,transparent),radial-gradient(ellipse_420px_420px_at_76%_2%,#e3e4e1_20%,transparent),radial-gradient(ellipse_500px_600px_at_95%_15%,#e8e4e1_30%,transparent),radial-gradient(ellipse_300px_500px_at_100%_90%,#eee7e0_10%,transparent)] font-['Noto_Sans','Noto_Sans_CJK_SC',sans-serif] text-xs text-[#262626]">
      <TitleBar />
      <MenuBar />
      <Ribbon />
      <main className="flex min-h-0 flex-1">
        <div className="relative flex min-w-0 flex-1">
          <div className="flex min-w-0 flex-1 flex-col pt-1.5">
            <div className="flex h-3.5 shrink-0">
              <button type="button" aria-label="制表符" className="ml-[5px] flex size-3.5 items-center justify-center rounded-sm bg-[#dadada]">
                <i className="size-[5px] border-b-2 border-l-2 border-[#777]" />
              </button>
              <div className="ml-[3px] flex flex-1 justify-center"><HRuler /></div>
            </div>
            <div className="flex min-h-0 flex-1">
              <VRuler />
              <div className="ml-[3px] flex flex-1 justify-center">
                <article className="mt-9 w-[1033px] border border-b-0 border-[#c9c7c6] bg-white pt-[123px] pl-[146px] shadow-[0_0_5px_rgba(0,0,0,0.12)]">
                  <DocTable />
                </article>
              </div>
            </div>
          </div>
          <ScrollBar />
          {/* input method badge */}
          <div className="absolute right-[196px] bottom-[138px] flex h-[26px] items-center gap-1 rounded-md border border-[#999] bg-white px-1 text-[13px] shadow-[0_1px_4px_rgba(0,0,0,0.5)]">
            CH
            <Ico size={13}><path d="M6 1Q9 6 2 10 6 13.500 10 10.500 14 6 6 1ZM1.500 11.500H2" /></Ico>
            简
          </div>
        </div>
        <StylePanel />
        <Rail />
      </main>
      <StatusBar />
      <Watermark />
    </div>
  );
}
